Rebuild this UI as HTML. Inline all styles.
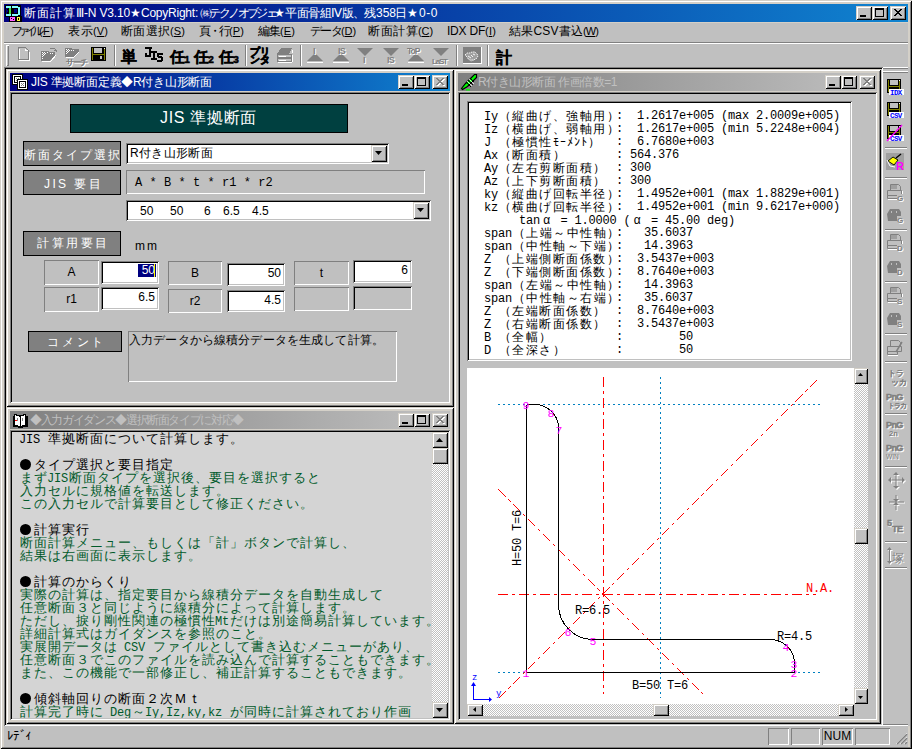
<!DOCTYPE html><html><head><meta charset="utf-8"><style>
*{margin:0;padding:0;box-sizing:border-box}
html,body{width:912px;height:749px;overflow:hidden;background:#c0c0c0}
body{position:relative;font-family:"Liberation Sans",sans-serif;font-size:12px;color:#000}
div{position:absolute}
.raised{background:#c0c0c0;box-shadow:inset 1px 1px #d4d0c8,inset -1px -1px #000,inset 2px 2px #fff,inset -2px -2px #808080}
.win{background:#d4d0c8;box-shadow:inset 1px 1px #d4d0c8,inset -1px -1px #000,inset 2px 2px #fff,inset -2px -2px #808080}
.sunk{box-shadow:inset 1px 1px #808080,inset -1px -1px #fff,inset 2px 2px #000,inset -2px -2px #c0c0c0}
.sunk1{box-shadow:inset 1px 1px #808080,inset -1px -1px #fff}
.tb{box-shadow:inset 1px 1px #fff,inset -1px -1px #808080}
.cap{color:#fff;white-space:nowrap;line-height:18px;font-size:12px}
.btn{width:16px;height:14px;background:#c0c0c0;box-shadow:inset 1px 1px #d4d0c8,inset -1px -1px #000,inset 2px 2px #fff,inset -2px -2px #808080}
.t{white-space:nowrap;line-height:13px}
.o{font-family:"Liberation Mono",monospace;font-size:12px;letter-spacing:-0.2px;white-space:pre;line-height:13px}
.o i{display:inline-block;width:13.5px;font-style:normal;text-align:center;letter-spacing:0;font-family:"Liberation Sans",sans-serif}
.o u{display:inline-block;width:7px;text-decoration:none;text-align:center;letter-spacing:0;font-family:"Liberation Sans",sans-serif}
.g{font-family:"Liberation Mono",monospace;font-size:12px;letter-spacing:-0.2px;white-space:pre;line-height:13px}
.g i{display:inline-block;width:14px;font-style:normal;text-align:center;letter-spacing:0;font-size:13px;font-family:"Liberation Sans",sans-serif}
.dot{display:inline-block;width:11px;height:11px;border-radius:50%;background:#000;vertical-align:-1px;position:relative;left:-0.5px}
.lbl{background:#808080;box-shadow:inset 0 0 0 1px #000;color:#fff;text-align:center;white-space:nowrap}
</style></head><body><div style="left:0px;top:0px;width:912px;height:749px;background:#d4d0c8;box-shadow:inset 1px 1px #d4d0c8,inset -1px -1px #000,inset 2px 2px #fff,inset -2px -2px #808080"></div><div style="left:4px;top:4px;width:904px;height:18px;background:linear-gradient(to right,#000080,#1084d0)"></div><svg style="position:absolute;left:0;top:0" width="24" height="24" shape-rendering="crispEdges"><rect x="5" y="5" width="16" height="12" fill="#000"/><rect x="9" y="16" width="13" height="6" fill="#000"/><rect x="6" y="6" width="5" height="2" fill="#80ffff"/><rect x="6" y="14" width="5" height="2" fill="#80ffff"/><rect x="9" y="8" width="2" height="6" fill="#40e040"/><rect x="7" y="8" width="1" height="1" fill="#000080"/><rect x="6" y="10" width="2" height="2" fill="#000080"/><rect x="6" y="8" width="1" height="3" fill="#000080"/><rect x="6" y="11" width="1" height="3" fill="#000080"/><rect x="12" y="6" width="6" height="2" fill="#80ffff"/><rect x="12" y="14" width="6" height="2" fill="#80ffff"/><rect x="18" y="7" width="2" height="8" fill="#80ffff"/><rect x="17" y="7" width="1" height="1" fill="#80ffff"/><rect x="17" y="14" width="1" height="1" fill="#80ffff"/><rect x="14" y="9" width="3" height="4" fill="#000080"/><rect x="10" y="17" width="5" height="4" fill="#ff60ff"/><rect x="11" y="18" width="1" height="1" fill="#000"/><rect x="13" y="19" width="1" height="1" fill="#000"/><rect x="17" y="17" width="3" height="4" fill="#ffff40"/><rect x="18" y="18" width="1" height="2" fill="#000"/></svg><div class="t" style="left:24px;top:4px;font-size:12px;line-height:18px;color:#fff;letter-spacing:1.000px;">断面計算Ⅲ</div><div class="t" style="left:84px;top:4px;font-size:12px;line-height:18px;color:#fff;letter-spacing:-0.170px;">-N V3.10</div><div class="t" style="left:130px;top:4px;font-size:12px;line-height:18px;color:#fff;letter-spacing:1.000px;">★</div><div class="t" style="left:141px;top:4px;font-size:12px;line-height:18px;color:#fff;letter-spacing:-0.237px;">CopyRight:</div><div class="t" style="left:200px;top:4px;font-size:12px;line-height:18px;color:#fff;letter-spacing:-2.625px;">㈱テクノオブジェ</div><div class="t" style="left:274px;top:4px;font-size:12px;line-height:18px;color:#fff;letter-spacing:1.000px;">★</div><div class="t" style="left:285px;top:4px;font-size:12px;line-height:18px;color:#fff;letter-spacing:-0.429px;">平面骨組Ⅳ版、</div><div class="t" style="left:364px;top:4px;font-size:12px;line-height:18px;color:#fff;letter-spacing:1.000px;">残</div><div class="t" style="left:376px;top:4px;font-size:12px;line-height:18px;color:#fff;letter-spacing:-0.010px;">358</div><div class="t" style="left:395px;top:4px;font-size:12px;line-height:18px;color:#fff;letter-spacing:1.000px;">日</div><div class="t" style="left:407px;top:4px;font-size:12px;line-height:18px;color:#fff;letter-spacing:2.000px;">★</div><div class="t" style="left:419px;top:4px;font-size:12px;line-height:18px;color:#fff;letter-spacing:0.552px;">0-0</div><div class="btn" style="left:856px;top:6px;width:16px;height:14px;"><div style="left:4px;top:9px;width:6px;height:2px;background:#000"></div></div><div class="btn" style="left:872px;top:6px;width:16px;height:14px;"><div style="left:3px;top:2px;width:9px;height:9px;border:1px solid #000;border-top-width:2px"></div></div><div class="btn" style="left:890px;top:6px;width:16px;height:14px;"><svg style="position:absolute;left:0;top:0" width="16" height="14" shape-rendering="crispEdges"><path d="M4 3h2v1h-2zM10 3h2v1h-2zM5 4h2v1h-2zM9 4h2v1h-2zM6 5h4v1h-4zM7 6h2v1h-2zM6 7h4v1h-4zM5 8h2v1h-2zM9 8h2v1h-2zM4 9h2v1h-2zM10 9h2v1h-2z" fill="#000"/></svg></div><div style="left:4px;top:23px;width:904px;height:19px;background:#c0c0c0"></div><div class="t" style="left:11px;top:24px;font-size:12px;line-height:14px;letter-spacing:-5.000px;">ファイル</div><div class="t" style="left:39px;top:24px;font-size:11px;line-height:14px;letter-spacing:0.307px;">(<u>F</u>)</div><div class="t" style="left:68px;top:24px;font-size:12px;line-height:14px;letter-spacing:0.500px;">表示</div><div class="t" style="left:93px;top:24px;font-size:11px;line-height:14px;letter-spacing:0.104px;">(<u>V</u>)</div><div class="t" style="left:121px;top:24px;font-size:12px;line-height:14px;letter-spacing:0.250px;">断面選択</div><div class="t" style="left:170px;top:24px;font-size:11px;line-height:14px;letter-spacing:0.104px;">(<u>S</u>)</div><div class="t" style="left:199px;top:24px;font-size:12px;line-height:14px;letter-spacing:-2.000px;">頁・行</div><div class="t" style="left:229px;top:24px;font-size:11px;line-height:14px;letter-spacing:0.104px;">(<u>P</u>)</div><div class="t" style="left:258px;top:24px;font-size:12px;line-height:14px;letter-spacing:-1.000px;">編集</div><div class="t" style="left:280px;top:24px;font-size:11px;line-height:14px;letter-spacing:0.104px;">(<u>E</u>)</div><div class="t" style="left:310px;top:24px;font-size:12px;line-height:14px;letter-spacing:-1.667px;">データ</div><div class="t" style="left:341px;top:24px;font-size:11px;line-height:14px;letter-spacing:-0.099px;">(<u>D</u>)</div><div class="t" style="left:368px;top:24px;font-size:12px;line-height:14px;letter-spacing:0.500px;">断面計算</div><div class="t" style="left:418px;top:24px;font-size:11px;line-height:14px;letter-spacing:-0.099px;">(<u>C</u>)</div><div class="t" style="left:447px;top:24px;font-size:12px;line-height:14px;letter-spacing:-0.224px;">IDX DF</div><div class="t" style="left:485px;top:24px;font-size:11px;line-height:14px;letter-spacing:0.198px;">(<u>I</u>)</div><div class="t" style="left:509px;top:24px;font-size:12px;line-height:14px;letter-spacing:0.188px;">結果CSV書込</div><div class="t" style="left:583px;top:24px;font-size:11px;line-height:14px;letter-spacing:-0.911px;">(<u>W</u>)</div><div style="left:4px;top:42px;width:904px;height:1px;background:#808080"></div><div style="left:4px;top:43px;width:904px;height:1px;background:#fff"></div><div style="left:4px;top:44px;width:904px;height:23px;background:#c0c0c0"></div><div style="left:6px;top:45px;width:3px;height:21px;box-shadow:inset 1px 1px #fff,inset -1px -1px #808080"></div><svg style="position:absolute;left:0;top:0" width="912" height="749"><g shape-rendering="crispEdges" fill="none"><path d="M19.5 48.5V60.5H29.5V51.5" stroke="#fff"/><path d="M18.5 47.5H25.5L28.5 50.5V59.5H18.5Z" stroke="#808080"/><path d="M25.5 48.5V50.5H27.5" stroke="#fff"/></g><g shape-rendering="crispEdges"><path d="M41 51h7l1 1h6v3l-5 6H41z" fill="#808080"/><path d="M42 52h1v1h-1zM44 52h1v1h-1zM43 53h1v1h-1zM42 54h1v1h-1zM45 53h1v1h-1zM44 54h1v1h-1zM43 55h1v1h-1zM42 56h1v1h-1zM42 58h1v1h-1zM47 52h1v1h-1zM50 53h1v1h-1zM52 53h1v1h-1z" fill="#fff"/><path d="M42 61h9M51 61l5-6" stroke="#fff" fill="none"/><path d="M50 48h4l2 2v2M54 50h3" stroke="#808080" fill="none"/></g><g shape-rendering="crispEdges"><path d="M65 48h6l1 1h7v3l-5 5H65z" fill="#808080"/><path d="M66 49h1v1h-1zM68 49h1v1h-1zM67 50h1v1h-1zM66 51h1v1h-1zM69 50h1v1h-1zM68 51h1v1h-1zM67 52h1v1h-1zM66 53h1v1h-1zM71 50h1v1h-1zM73 50h1v1h-1z" fill="#fff"/><path d="M66 57h8M74 57l5-5" stroke="#fff" fill="none"/></g><text x="67" y="65.5" font-size="7.5" font-weight="bold" fill="#fff" stroke="#fff" font-family="Liberation Sans" letter-spacing="-0.8" stroke-width="0.01">サーチ</text><text x="66" y="64.5" font-size="7.5" font-weight="bold" fill="#808080" stroke="#808080" font-family="Liberation Sans" letter-spacing="-0.8" stroke-width="0.01">サーチ</text><g shape-rendering="crispEdges"><rect x="91" y="47" width="15" height="14" fill="#000"/><rect x="92" y="48" width="1" height="12" fill="#808000"/><rect x="104" y="49" width="1" height="11" fill="#808000"/><rect x="92" y="54" width="13" height="1" fill="#808000"/><rect x="94" y="48" width="8" height="5" fill="#c0c0c0"/><rect x="100" y="56" width="2" height="3" fill="#c0c0c0"/><rect x="104" y="48" width="1" height="1" fill="#fff"/></g><rect x="114" y="45" width="1" height="21" fill="#808080"/><rect x="115" y="45" width="1" height="21" fill="#fff"/><text x="121" y="62" font-size="16" font-weight="bold" fill="#000" stroke="#000" stroke-width="0.3">単</text><g shape-rendering="crispEdges" fill="#000"><rect x="145" y="47" width="7" height="2"/><rect x="149" y="47" width="2" height="10"/><rect x="145" y="55" width="5" height="2"/><rect x="145" y="53" width="2" height="3"/><rect x="151" y="51" width="6" height="2"/><rect x="153" y="51" width="2" height="9"/><rect x="151" y="58" width="6" height="2"/><rect x="158" y="53" width="5" height="2"/><rect x="157" y="53" width="2" height="4"/><rect x="158" y="56" width="4" height="2"/><rect x="161" y="57" width="2" height="4"/><rect x="157" y="60" width="5" height="2"/></g><text x="170" y="62" font-size="15" font-weight="bold" fill="#000" stroke="#000" stroke-width="0.3">任</text><text x="184" y="63" font-size="10" font-weight="bold" font-family="Liberation Mono" stroke="#000" stroke-width="0.5">1</text><text x="194" y="62" font-size="15" font-weight="bold" fill="#000" stroke="#000" stroke-width="0.3">任</text><text x="208" y="63" font-size="10" font-weight="bold" font-family="Liberation Mono" stroke="#000" stroke-width="0.5">2</text><text x="219" y="62" font-size="15" font-weight="bold" fill="#000" stroke="#000" stroke-width="0.3">任</text><text x="233" y="63" font-size="10" font-weight="bold" font-family="Liberation Mono" stroke="#000" stroke-width="0.5">3</text><rect x="245" y="45" width="1" height="21" fill="#808080"/><rect x="246" y="45" width="1" height="21" fill="#fff"/><text x="250" y="55" font-size="9.5" font-weight="bold" letter-spacing="-0.5" stroke="#000" stroke-width="0.8">プリ</text><text x="250" y="63" font-size="9.5" font-weight="bold" letter-spacing="-0.5" stroke="#000" stroke-width="0.8">ンタ</text><g shape-rendering="crispEdges"><path d="M281 48h11l-3 6h-12z" fill="#808080"/><path d="M277 54h14v3h-14zM277 58h14v3h-14z" fill="#c0c0c0" stroke="#808080" stroke-width="1"/><path d="M278 62h14M292 55v7M292 50v3" stroke="#fff"/><path d="M279 56h7M279 60h7" stroke="#fff"/></g><rect x="300" y="45" width="1" height="21" fill="#808080"/><rect x="301" y="45" width="1" height="21" fill="#fff"/><path d="M307 61l8-8 8 8z" fill="#808080"/><path d="M307 62h16" stroke="#fff" shape-rendering="crispEdges"/><text x="314" y="55" font-size="9" font-weight="bold" fill="#fff" stroke="#fff" font-family="Liberation Sans" letter-spacing="0" stroke-width="0.01">I</text><text x="313" y="54" font-size="9" font-weight="bold" fill="#808080" stroke="#808080" font-family="Liberation Sans" letter-spacing="0" stroke-width="0.01">I</text><path d="M333 61l8-8 8 8z" fill="#808080"/><path d="M333 62h16" stroke="#fff" shape-rendering="crispEdges"/><text x="339" y="55" font-size="9" font-weight="bold" fill="#fff" stroke="#fff" font-family="Liberation Sans" letter-spacing="-0.8" stroke-width="0.01">IS</text><text x="338" y="54" font-size="9" font-weight="bold" fill="#808080" stroke="#808080" font-family="Liberation Sans" letter-spacing="-0.8" stroke-width="0.01">IS</text><path d="M357 48h16l-8 8z" fill="#808080"/><text x="364" y="64" font-size="9" font-weight="bold" fill="#fff" stroke="#fff" font-family="Liberation Sans" letter-spacing="0" stroke-width="0.01">I</text><text x="363" y="63" font-size="9" font-weight="bold" fill="#808080" stroke="#808080" font-family="Liberation Sans" letter-spacing="0" stroke-width="0.01">I</text><path d="M383 48h16l-8 8z" fill="#808080"/><text x="388" y="64" font-size="9" font-weight="bold" fill="#fff" stroke="#fff" font-family="Liberation Sans" letter-spacing="-0.8" stroke-width="0.01">IS</text><text x="387" y="63" font-size="9" font-weight="bold" fill="#808080" stroke="#808080" font-family="Liberation Sans" letter-spacing="-0.8" stroke-width="0.01">IS</text><path d="M408 61l8-8 8 8z" fill="#808080"/><path d="M408 62h16" stroke="#fff" shape-rendering="crispEdges"/><text x="408" y="55" font-size="8.5" font-weight="bold" fill="#fff" stroke="#fff" font-family="Liberation Sans" letter-spacing="-1" stroke-width="0.01">ToP</text><text x="407" y="54" font-size="8.5" font-weight="bold" fill="#808080" stroke="#808080" font-family="Liberation Sans" letter-spacing="-1" stroke-width="0.01">ToP</text><path d="M433 48h16l-8 8z" fill="#808080"/><text x="433" y="65" font-size="8" font-weight="bold" fill="#fff" stroke="#fff" font-family="Liberation Sans" letter-spacing="-1.2" stroke-width="0.01">LaST</text><text x="432" y="64" font-size="8" font-weight="bold" fill="#808080" stroke="#808080" font-family="Liberation Sans" letter-spacing="-1.2" stroke-width="0.01">LaST</text><rect x="456" y="45" width="1" height="21" fill="#808080"/><rect x="457" y="45" width="1" height="21" fill="#fff"/><g shape-rendering="crispEdges"><rect x="463" y="47" width="18" height="16" fill="#808080"/><rect x="481" y="47" width="1" height="17" fill="#fff"/><rect x="463" y="63" width="19" height="1" fill="#fff"/></g><path d="M465 55l2-2 3 0 2-1 3 0 2 2 1 2-2 3-3 1-3 0z" fill="#a0a0a0" stroke="#fff" stroke-width="0.9" stroke-dasharray="1.5 0.8"/><path d="M468 56l3 2M471 55l2 2M473 54l2 1" stroke="#fff" stroke-width="0.9"/><path d="M467 58l4 3 3-1" stroke="#c0c0c0" fill="none"/><rect x="487" y="45" width="1" height="21" fill="#808080"/><rect x="488" y="45" width="1" height="21" fill="#fff"/><text x="496" y="63" font-size="16" font-weight="bold" fill="#000" stroke="#000" stroke-width="0.3">計</text></svg><div style="left:4px;top:67px;width:879px;height:659px;background:#808080;box-shadow:inset 1px 1px #808080,inset -1px -1px #fff,inset 2px 2px #000,inset -2px -2px #c0c0c0"></div><div class="win" style="left:6px;top:69px;width:448px;height:338px;"></div><div style="left:10px;top:73px;width:440px;height:18px;background:linear-gradient(to right,#000080,#1084d0)"></div><svg style="position:absolute;left:0;top:0" width="40" height="100" shape-rendering="crispEdges"><rect x="12" y="74" width="11" height="11" fill="#000"/><rect x="13" y="75" width="9" height="9" fill="#fff"/><rect x="14" y="76" width="7" height="7" fill="#000"/><rect x="15" y="77" width="5" height="5" fill="#fff"/><rect x="16" y="78" width="1" height="1" fill="#808080"/><rect x="18" y="78" width="1" height="1" fill="#808080"/><rect x="17" y="79" width="1" height="1" fill="#808080"/><rect x="16" y="80" width="1" height="1" fill="#808080"/><rect x="18" y="80" width="1" height="1" fill="#808080"/><rect x="17" y="79" width="11" height="11" fill="#000"/><rect x="18" y="80" width="9" height="9" fill="#fff"/><rect x="19" y="81" width="7" height="7" fill="#000"/><rect x="20" y="82" width="5" height="5" fill="#fff"/><rect x="21" y="83" width="1" height="1" fill="#808080"/><rect x="23" y="83" width="1" height="1" fill="#808080"/><rect x="22" y="84" width="1" height="1" fill="#808080"/><rect x="21" y="85" width="1" height="1" fill="#808080"/><rect x="23" y="85" width="1" height="1" fill="#808080"/></svg><div class="btn" style="left:398px;top:75px;width:16px;height:14px;"><div style="left:4px;top:9px;width:6px;height:2px;background:#000"></div></div><div class="btn" style="left:414px;top:75px;width:16px;height:14px;"><div style="left:3px;top:2px;width:9px;height:9px;border:1px solid #000;border-top-width:2px"></div></div><div class="btn" style="left:432px;top:75px;width:16px;height:14px;"><svg style="position:absolute;left:0;top:0" width="16" height="14" shape-rendering="crispEdges"><path d="M5 4h2v1h-2zM11 4h2v1h-2zM6 5h2v1h-2zM10 5h2v1h-2zM7 6h4v1h-4zM8 7h2v1h-2zM7 8h4v1h-4zM6 9h2v1h-2zM10 9h2v1h-2zM5 10h2v1h-2zM11 10h2v1h-2z" fill="#fff"/><path d="M4 3h2v1h-2zM10 3h2v1h-2zM5 4h2v1h-2zM9 4h2v1h-2zM6 5h4v1h-4zM7 6h2v1h-2zM6 7h4v1h-4zM5 8h2v1h-2zM9 8h2v1h-2zM4 9h2v1h-2zM10 9h2v1h-2z" fill="#808080"/></svg></div><div class="t" style="left:31px;top:73px;font-size:12px;line-height:18px;color:#fff;letter-spacing:-0.241px;">JIS 準拠断面定義◆R付き山形断面</div><div class="sunk" style="left:10px;top:92px;width:440px;height:311px;background:#c0c0c0"></div><div class="win" style="left:6px;top:407px;width:448px;height:317px;"></div><div style="left:10px;top:411px;width:440px;height:18px;background:linear-gradient(to right,#808080,#c0c0c0)"></div><svg style="position:absolute;left:0;top:400px" width="40" height="40" shape-rendering="crispEdges"><path d="M12.5 15.5h2v10h4v1h3v-1h4v-10h2v11h-5v1h-5v-1h-5z" fill="#000"/><path d="M14.5 14.5h2v1h3v1h1v-1h3v-1h2v11h-3v1h-2v1h-1v-1h-2v-1h-3z" fill="#fff" stroke="#000"/><rect x="20" y="16" width="1" height="11" fill="#000"/><path d="M17 18l1 2 -1 1M23 18l-1 2 1 1" stroke="#808080" fill="none"/><rect x="15" y="20" width="2" height="1" fill="#ff0000"/></svg><div class="btn" style="left:398px;top:413px;width:16px;height:14px;"><div style="left:4px;top:9px;width:6px;height:2px;background:#000"></div></div><div class="btn" style="left:414px;top:413px;width:16px;height:14px;"><div style="left:3px;top:2px;width:9px;height:9px;border:1px solid #000;border-top-width:2px"></div></div><div class="btn" style="left:432px;top:413px;width:16px;height:14px;"><svg style="position:absolute;left:0;top:0" width="16" height="14" shape-rendering="crispEdges"><path d="M5 4h2v1h-2zM11 4h2v1h-2zM6 5h2v1h-2zM10 5h2v1h-2zM7 6h4v1h-4zM8 7h2v1h-2zM7 8h4v1h-4zM6 9h2v1h-2zM10 9h2v1h-2zM5 10h2v1h-2zM11 10h2v1h-2z" fill="#fff"/><path d="M4 3h2v1h-2zM10 3h2v1h-2zM5 4h2v1h-2zM9 4h2v1h-2zM6 5h4v1h-4zM7 6h2v1h-2zM6 7h4v1h-4zM5 8h2v1h-2zM9 8h2v1h-2zM4 9h2v1h-2zM10 9h2v1h-2z" fill="#808080"/></svg></div><div class="t" style="left:30px;top:411px;font-size:12px;line-height:18px;color:#c0c0c0;letter-spacing:-1.350px;">◆入力ガイダンス◆選択断面タイプに対応◆</div><div class="sunk" style="left:10px;top:430px;width:440px;height:290px;background:#c0c0c0"></div><div class="win" style="left:454px;top:69px;width:427px;height:655px;"></div><div style="left:458px;top:73px;width:419px;height:18px;background:linear-gradient(to right,#808080,#c0c0c0)"></div><svg style="position:absolute;left:456px;top:72px" width="24" height="20"><path d="M5.5 16.5l4-5 9-9h2v3l-9 9-5 3z" fill="#00ff00" stroke="#000" stroke-width="1.2"/><path d="M10 10l5 5M12 8l5 5M14 6l4 4" stroke="#000" stroke-width="1"/><path d="M11 9l5 5M13 7l5 5" stroke="#fff" stroke-width="0.8"/><rect x="10" y="17" width="4" height="1.5" fill="#00ff00"/></svg><div class="btn" style="left:825px;top:75px;width:16px;height:14px;"><div style="left:4px;top:9px;width:6px;height:2px;background:#000"></div></div><div class="btn" style="left:841px;top:75px;width:16px;height:14px;"><div style="left:3px;top:2px;width:9px;height:9px;border:1px solid #000;border-top-width:2px"></div></div><div class="btn" style="left:859px;top:75px;width:16px;height:14px;"><svg style="position:absolute;left:0;top:0" width="16" height="14" shape-rendering="crispEdges"><path d="M5 4h2v1h-2zM11 4h2v1h-2zM6 5h2v1h-2zM10 5h2v1h-2zM7 6h4v1h-4zM8 7h2v1h-2zM7 8h4v1h-4zM6 9h2v1h-2zM10 9h2v1h-2zM5 10h2v1h-2zM11 10h2v1h-2z" fill="#fff"/><path d="M4 3h2v1h-2zM10 3h2v1h-2zM5 4h2v1h-2zM9 4h2v1h-2zM6 5h4v1h-4zM7 6h2v1h-2zM6 7h4v1h-4zM5 8h2v1h-2zM9 8h2v1h-2zM4 9h2v1h-2zM10 9h2v1h-2z" fill="#808080"/></svg></div><div class="t" style="left:478px;top:73px;font-size:12px;line-height:18px;color:#c0c0c0;letter-spacing:-0.478px;">R付き山形断面 作画倍数=1</div><div class="sunk" style="left:458px;top:92px;width:419px;height:628px;background:#c0c0c0"></div><div style="left:70px;top:104px;width:278px;height:29px;background:#004040;box-shadow:inset 0 0 0 1px #000"></div><div class="t" style="left:160px;top:107px;font-size:16px;line-height:22px;color:#fff;letter-spacing:0.680px;">JIS 準拠断面</div><div class="lbl" style="left:23px;top:141px;width:98px;height:25px;"></div><div class="t" style="left:24px;top:148px;font-size:12px;line-height:15px;color:#fff;letter-spacing:2.000px;">断面タイプ選択</div><div class="lbl" style="left:23px;top:170px;width:98px;height:25px;"></div><div class="t" style="left:44px;top:177px;font-size:12px;line-height:15px;color:#fff;letter-spacing:2.388px;">JIS 要目</div><div class="lbl" style="left:23px;top:231px;width:98px;height:25px;"></div><div class="t" style="left:37px;top:236px;font-size:12px;line-height:15px;color:#fff;letter-spacing:2.600px;">計算用要目</div><div class="lbl" style="left:28px;top:331px;width:94px;height:21px;"></div><div class="t" style="left:47px;top:335px;font-size:12px;line-height:15px;color:#fff;letter-spacing:2.750px;">コメント</div><div class="sunk" style="left:126px;top:143px;width:263px;height:21px;background:#fff"></div><div class="raised" style="left:371px;top:145px;width:16px;height:17px;"><svg style="position:absolute;left:4px;top:6px" width="8" height="5"><path d="M0 0h7l-3.5 4z" fill="#000"/></svg></div><div class="t" style="left:130px;top:146px;line-height:15px;"></div><div class="t" style="left:130px;top:146px;font-size:12px;line-height:15px;letter-spacing:0.333px;">R付き山形断面</div><div class="sunk1" style="left:126px;top:170px;width:299px;height:24px;"></div><div class="o" style="left:135px;top:177px;font-size:12px;letter-spacing:0.05px">A * B * t * r1 * r2</div><div class="sunk" style="left:126px;top:200px;width:305px;height:21px;background:#fff"></div><div class="raised" style="left:413px;top:202px;width:16px;height:17px;"><svg style="position:absolute;left:4px;top:6px" width="8" height="5"><path d="M0 0h7l-3.5 4z" fill="#000"/></svg></div><div class="t" style="left:130px;top:203px;line-height:15px;"></div><div class="t" style="left:140px;top:204px;line-height:14px">50</div><div class="t" style="left:170px;top:204px;line-height:14px">50</div><div class="t" style="left:204px;top:204px;line-height:14px">6</div><div class="t" style="left:223px;top:204px;line-height:14px">6.5</div><div class="t" style="left:252px;top:204px;line-height:14px">4.5</div><div class="t" style="left:135px;top:240px;letter-spacing:2px">mm</div><div class="sunk1" style="left:44px;top:260px;width:55px;height:25px;text-align:center;line-height:25px">A</div><div class="sunk" style="left:101px;top:261px;width:58px;height:23px;background:#fff"></div><div style="left:138px;top:264px;width:18px;height:13px;background:#000080;color:#fff;text-align:right;line-height:13px;padding-right:1px;white-space:nowrap">50</div><div style="left:154px;top:264px;width:1px;height:13px;background:#ffff00"></div><div class="sunk1" style="left:168px;top:261px;width:54px;height:24px;text-align:center;line-height:24px">B</div><div class="sunk" style="left:227px;top:263px;width:58px;height:23px;background:#fff"></div><div class="t" style="right:631px;top:266px;line-height:14px">50</div><div class="sunk1" style="left:294px;top:261px;width:55px;height:24px;text-align:center;line-height:24px">t</div><div class="sunk" style="left:353px;top:260px;width:59px;height:23px;background:#fff"></div><div class="t" style="right:504px;top:263px;line-height:14px">6</div><div class="sunk1" style="left:44px;top:287px;width:55px;height:25px;text-align:center;line-height:25px">r1</div><div class="sunk" style="left:101px;top:287px;width:58px;height:23px;background:#fff"></div><div class="t" style="right:757px;top:290px;line-height:14px">6.5</div><div class="sunk1" style="left:168px;top:289px;width:54px;height:24px;text-align:center;line-height:24px">r2</div><div class="sunk" style="left:227px;top:290px;width:58px;height:22px;background:#fff"></div><div class="t" style="right:631px;top:293px;line-height:14px">4.5</div><div class="sunk1" style="left:294px;top:287px;width:55px;height:24px;text-align:center;line-height:24px"></div><div class="sunk" style="left:353px;top:286px;width:59px;height:24px;background:#c0c0c0"></div><div class="sunk1" style="left:128px;top:331px;width:269px;height:51px;"></div><div class="t" style="left:129px;top:333px;font-size:12px;line-height:15px;letter-spacing:0.143px;">入力データから線積分データを生成して計算。</div><div style="left:12px;top:432px;width:436px;height:286px;background:#d4d4d4"></div><div style="left:0;top:0;width:448px;height:718px;overflow:hidden;clip-path:inset(432px 0 0 12px)"><div class="g" style="left:19px;top:432px;color:#000">JIS <i>準</i><i>拠</i><i>断</i><i>面</i><i>に</i><i>つ</i><i>い</i><i>て</i><i>計</i><i>算</i><i>し</i><i>ま</i><i>す</i><i>。</i></div><div class="g" style="left:19px;top:445px;color:#000"></div><div class="g" style="left:19px;top:458px;color:#000"><i><b class="dot"></b></i><i>タ</i><i>イ</i><i>プ</i><i>選</i><i>択</i><i>と</i><i>要</i><i>目</i><i>指</i><i>定</i></div><div class="g" style="left:19px;top:471px;color:#005a2a"><i>ま</i><i>ず</i>JIS<i>断</i><i>面</i><i>タ</i><i>イ</i><i>プ</i><i>を</i><i>選</i><i>択</i><i>後</i><i>、</i><i>要</i><i>目</i><i>を</i><i>選</i><i>択</i><i>す</i><i>る</i><i>と</i></div><div class="g" style="left:19px;top:484px;color:#005a2a"><i>入</i><i>力</i><i>セ</i><i>ル</i><i>に</i><i>規</i><i>格</i><i>値</i><i>を</i><i>転</i><i>送</i><i>し</i><i>ま</i><i>す</i><i>。</i></div><div class="g" style="left:19px;top:497px;color:#005a2a"><i>こ</i><i>の</i><i>入</i><i>力</i><i>セ</i><i>ル</i><i>で</i><i>計</i><i>算</i><i>要</i><i>目</i><i>と</i><i>し</i><i>て</i><i>修</i><i>正</i><i>く</i><i>だ</i><i>さ</i><i>い</i><i>。</i></div><div class="g" style="left:19px;top:510px;color:#000"></div><div class="g" style="left:19px;top:523px;color:#000"><i><b class="dot"></b></i><i>計</i><i>算</i><i>実</i><i>行</i></div><div class="g" style="left:19px;top:536px;color:#005a2a"><i>断</i><i>面</i><i>計</i><i>算</i><i>メ</i><i>ニ</i><i>ュ</i><i>ー</i><i>、</i><i>も</i><i>し</i><i>く</i><i>は</i><i>「</i><i>計</i><i>」</i><i>ボ</i><i>タ</i><i>ン</i><i>で</i><i>計</i><i>算</i><i>し</i><i>、</i></div><div class="g" style="left:19px;top:549px;color:#005a2a"><i>結</i><i>果</i><i>は</i><i>右</i><i>画</i><i>面</i><i>に</i><i>表</i><i>示</i><i>し</i><i>ま</i><i>す</i><i>。</i></div><div class="g" style="left:19px;top:562px;color:#000"></div><div class="g" style="left:19px;top:575px;color:#000"><i><b class="dot"></b></i><i>計</i><i>算</i><i>の</i><i>か</i><i>ら</i><i>く</i><i>り</i></div><div class="g" style="left:19px;top:588px;color:#005a2a"><i>実</i><i>際</i><i>の</i><i>計</i><i>算</i><i>は</i><i>、</i><i>指</i><i>定</i><i>要</i><i>目</i><i>か</i><i>ら</i><i>線</i><i>積</i><i>分</i><i>デ</i><i>ー</i><i>タ</i><i>を</i><i>自</i><i>動</i><i>生</i><i>成</i><i>し</i><i>て</i></div><div class="g" style="left:19px;top:601px;color:#005a2a"><i>任</i><i>意</i><i>断</i><i>面</i><i>３</i><i>と</i><i>同</i><i>じ</i><i>よ</i><i>う</i><i>に</i><i>線</i><i>積</i><i>分</i><i>に</i><i>よ</i><i>っ</i><i>て</i><i>計</i><i>算</i><i>し</i><i>ま</i><i>す</i><i>。</i></div><div class="g" style="left:19px;top:614px;color:#005a2a"><i>た</i><i>だ</i><i>し</i><i>、</i><i>捩</i><i>り</i><i>剛</i><i>性</i><i>関</i><i>連</i><i>の</i><i>極</i><i>慣</i><i>性</i>Mt<i>だ</i><i>け</i><i>は</i><i>別</i><i>途</i><i>簡</i><i>易</i><i>計</i><i>算</i><i>し</i><i>て</i><i>い</i><i>ま</i><i>す</i><i>。</i></div><div class="g" style="left:19px;top:627px;color:#005a2a"><i>詳</i><i>細</i><i>計</i><i>算</i><i>式</i><i>は</i><i>ガ</i><i>イ</i><i>ダ</i><i>ン</i><i>ス</i><i>を</i><i>参</i><i>照</i><i>の</i><i>こ</i><i>と</i><i>。</i></div><div class="g" style="left:19px;top:640px;color:#005a2a"><i>実</i><i>展</i><i>開</i><i>デ</i><i>ー</i><i>タ</i><i>は</i> CSV <i>フ</i><i>ァ</i><i>イ</i><i>ル</i><i>と</i><i>し</i><i>て</i><i>書</i><i>き</i><i>込</i><i>む</i><i>メ</i><i>ニ</i><i>ュ</i><i>ー</i><i>が</i><i>あ</i><i>り</i><i>、</i></div><div class="g" style="left:19px;top:653px;color:#005a2a"><i>任</i><i>意</i><i>断</i><i>面</i><i>３</i><i>で</i><i>こ</i><i>の</i><i>フ</i><i>ァ</i><i>イ</i><i>ル</i><i>を</i><i>読</i><i>み</i><i>込</i><i>ん</i><i>で</i><i>計</i><i>算</i><i>す</i><i>る</i><i>こ</i><i>と</i><i>も</i><i>で</i><i>き</i><i>ま</i><i>す</i><i>。</i></div><div class="g" style="left:19px;top:666px;color:#005a2a"><i>ま</i><i>た</i><i>、</i><i>こ</i><i>の</i><i>機</i><i>能</i><i>で</i><i>一</i><i>部</i><i>修</i><i>正</i><i>し</i><i>、</i><i>補</i><i>正</i><i>計</i><i>算</i><i>す</i><i>る</i><i>こ</i><i>と</i><i>も</i><i>で</i><i>き</i><i>ま</i><i>す</i><i>。</i></div><div class="g" style="left:19px;top:679px;color:#000"></div><div class="g" style="left:19px;top:692px;color:#000"><i><b class="dot"></b></i><i>傾</i><i>斜</i><i>軸</i><i>回</i><i>り</i><i>の</i><i>断</i><i>面</i><i>２</i><i>次</i><i>Ｍ</i><i>ｔ</i></div><div class="g" style="left:19px;top:705px;color:#005a2a"><i>計</i><i>算</i><i>完</i><i>了</i><i>時</i><i>に</i> Deg<i>～</i>Iy,Iz,ky,kz <i>が</i><i>同</i><i>時</i><i>に</i><i>計</i><i>算</i><i>さ</i><i>れ</i><i>て</i><i>お</i><i>り</i><i>作</i><i>画</i></div></div><div style="left:432px;top:432px;width:16px;height:286px;background-color:#fff;background-image:repeating-conic-gradient(#c0c0c0 0 25%,#fff 0 50%);background-size:2px 2px"></div><div class="raised" style="left:432px;top:432px;width:16px;height:16px;background:#c0c0c0"><svg style="position:absolute;left:4px;top:6px" width="7" height="4"><path d="M3.5 0L7 4H0z" fill="#000"/></svg></div><div class="raised" style="left:432px;top:702px;width:16px;height:16px;background:#c0c0c0"><svg style="position:absolute;left:4px;top:6px" width="7" height="4"><path d="M0 0h7L3.5 4z" fill="#000"/></svg></div><div class="raised" style="left:432px;top:448px;width:16px;height:16px;background:#c0c0c0"></div><div class="sunk" style="left:467px;top:101px;width:385px;height:260px;background:#fff"></div><div class="o" style="left:484px;top:110px">Iy<i>（</i><i>縦</i><i>曲</i><i>げ</i><i>、</i><i>強</i><i>軸</i><i>用</i><i>）</i></div><div class="o" style="left:616px;top:110px">:  1.2617e+005 (max 2.0009e+005)</div><div class="o" style="left:484px;top:123px">Iz<i>（</i><i>横</i><i>曲</i><i>げ</i><i>、</i><i>弱</i><i>軸</i><i>用</i><i>）</i></div><div class="o" style="left:616px;top:123px">:  1.2617e+005 (min 5.2248e+004)</div><div class="o" style="left:484px;top:136px">J <i>（</i><i>極</i><i>慣</i><i>性</i><u>ﾓ</u><u>ｰ</u><u>ﾒ</u><u>ﾝ</u><u>ﾄ</u><i>）</i></div><div class="o" style="left:616px;top:136px">:  6.7680e+003</div><div class="o" style="left:484px;top:149px">Ax<i>（</i><i>断</i><i>面</i><i>積</i><i>）</i></div><div class="o" style="left:616px;top:149px">: 564.376</div><div class="o" style="left:484px;top:162px">Ay<i>（</i><i>左</i><i>右</i><i>剪</i><i>断</i><i>面</i><i>積</i><i>）</i></div><div class="o" style="left:616px;top:162px">: 300</div><div class="o" style="left:484px;top:175px">Az<i>（</i><i>上</i><i>下</i><i>剪</i><i>断</i><i>面</i><i>積</i><i>）</i></div><div class="o" style="left:616px;top:175px">: 300</div><div class="o" style="left:484px;top:188px">ky<i>（</i><i>縦</i><i>曲</i><i>げ</i><i>回</i><i>転</i><i>半</i><i>径</i><i>）</i></div><div class="o" style="left:616px;top:188px">:  1.4952e+001 (max 1.8829e+001)</div><div class="o" style="left:484px;top:201px">kz<i>（</i><i>横</i><i>曲</i><i>げ</i><i>回</i><i>転</i><i>半</i><i>径</i><i>）</i></div><div class="o" style="left:616px;top:201px">:  1.4952e+001 (min 9.6217e+000)</div><div class="o" style="left:484px;top:214px">     tan<i>α</i> = 1.0000 (<i>α</i> = 45.00 deg)</div><div class="o" style="left:484px;top:227px">span<i>（</i><i>上</i><i>端</i><i>～</i><i>中</i><i>性</i><i>軸</i><i>）</i></div><div class="o" style="left:616px;top:227px">:   35.6037</div><div class="o" style="left:484px;top:240px">span<i>（</i><i>中</i><i>性</i><i>軸</i><i>～</i><i>下</i><i>端</i><i>）</i></div><div class="o" style="left:616px;top:240px">:   14.3963</div><div class="o" style="left:484px;top:253px">Z <i>（</i><i>上</i><i>端</i><i>側</i><i>断</i><i>面</i><i>係</i><i>数</i><i>）</i></div><div class="o" style="left:616px;top:253px">:  3.5437e+003</div><div class="o" style="left:484px;top:266px">Z <i>（</i><i>下</i><i>端</i><i>側</i><i>断</i><i>面</i><i>係</i><i>数</i><i>）</i></div><div class="o" style="left:616px;top:266px">:  8.7640e+003</div><div class="o" style="left:484px;top:279px">span<i>（</i><i>左</i><i>端</i><i>～</i><i>中</i><i>性</i><i>軸</i><i>）</i></div><div class="o" style="left:616px;top:279px">:   14.3963</div><div class="o" style="left:484px;top:292px">span<i>（</i><i>中</i><i>性</i><i>軸</i><i>～</i><i>右</i><i>端</i><i>）</i></div><div class="o" style="left:616px;top:292px">:   35.6037</div><div class="o" style="left:484px;top:305px">Z <i>（</i><i>左</i><i>端</i><i>断</i><i>面</i><i>係</i><i>数</i><i>）</i></div><div class="o" style="left:616px;top:305px">:  8.7640e+003</div><div class="o" style="left:484px;top:318px">Z <i>（</i><i>右</i><i>端</i><i>断</i><i>面</i><i>係</i><i>数</i><i>）</i></div><div class="o" style="left:616px;top:318px">:  3.5437e+003</div><div class="o" style="left:484px;top:331px">B <i>（</i><i>全</i><i>幅</i><i>）</i></div><div class="o" style="left:616px;top:331px">:        50</div><div class="o" style="left:484px;top:344px">D <i>（</i><i>全</i><i>深</i><i>さ</i><i>）</i></div><div class="o" style="left:616px;top:344px">:        50</div><div style="left:467px;top:368px;width:387px;height:336px;background:#fff"></div><svg style="position:absolute;left:0;top:0;clip-path:inset(368px 59px 46px 467px)" width="912" height="749"><path d="M498 404.5H821M498 672.5H821M660.5 377V698" stroke="#0080c0" stroke-dasharray="2 3" fill="none" shape-rendering="crispEdges"/><path d="M498 594.5H816M603.5 377V694" stroke="#ff0000" stroke-dasharray="10 4 3 4" fill="none" shape-rendering="crispEdges"/><path d="M498.5 698.5L817.5 379.5M498.5 489.5L703.5 694.5" stroke="#ff0000" stroke-dasharray="10 4 3 4" fill="none" shape-rendering="crispEdges"/><path d="M526.5 404.5V672.5H794.5V663" stroke="#000" fill="none" shape-rendering="crispEdges"/><path d="M794.5 663 A24.5 24 0 0 0 770 639.5M770 639.5H593M558.5 604.5V428M534 404.5H526.5" stroke="#000" fill="none" shape-rendering="crispEdges"/><path d="M794.5 663 A24.5 24 0 0 0 770 639.5M593 639.5 A34.7 35 0 0 1 558.5 604.5M558.5 428 A24 23.5 0 0 0 534 404.5" stroke="#000" fill="none" shape-rendering="crispEdges"/><text x="526" y="676.5" font-size="11.5" fill="#ff00ff" font-family="Liberation Mono" text-anchor="middle">1</text><text x="794" y="676.5" font-size="11.5" fill="#ff00ff" font-family="Liberation Mono" text-anchor="middle">2</text><text x="794" y="667.5" font-size="11.5" fill="#ff00ff" font-family="Liberation Mono" text-anchor="middle">3</text><text x="786" y="650.5" font-size="11.5" fill="#ff00ff" font-family="Liberation Mono" text-anchor="middle">4</text><text x="593" y="644.5" font-size="11.5" fill="#ff00ff" font-family="Liberation Mono" text-anchor="middle">5</text><text x="568" y="635.5" font-size="11.5" fill="#ff00ff" font-family="Liberation Mono" text-anchor="middle">6</text><text x="559" y="433.5" font-size="11.5" fill="#ff00ff" font-family="Liberation Mono" text-anchor="middle">7</text><text x="551" y="416.5" font-size="11.5" fill="#ff00ff" font-family="Liberation Mono" text-anchor="middle">8</text><text x="526" y="408.5" font-size="11.5" fill="#ff00ff" font-family="Liberation Mono" text-anchor="middle">9</text><text x="575" y="614" font-size="12" fill="#000" font-family="Liberation Mono" letter-spacing="-0.2" >R=6.5</text><text x="632" y="689" font-size="12" fill="#000" font-family="Liberation Mono" letter-spacing="-0.2" >B=50 T=6</text><text x="777" y="640" font-size="12" fill="#000" font-family="Liberation Mono" letter-spacing="-0.2" >R=4.5</text><text x="806" y="592" font-size="12" fill="#ff0000" font-family="Liberation Mono" letter-spacing="-0.2" >N.A.</text><text x="0" y="0" font-size="12" font-family="Liberation Mono" letter-spacing="-0.2" transform="translate(521 566) rotate(-90)">H=50 T=6</text><path d="M473.5 699V684M473 699.5H490" stroke="#0000ff" stroke-width="1.5" fill="none" shape-rendering="crispEdges"/><path d="M471 686l2.5-4 2.5 4zM489 697l3 2.5-3 2.5z" fill="#0000ff"/><text x="472" y="680" font-size="9" fill="#0000ff" font-family="Liberation Mono">z</text><text x="496" y="696" font-size="9" fill="#0000ff" font-family="Liberation Mono">y</text></svg><div style="left:854px;top:368px;width:14px;height:336px;background-color:#fff;background-image:repeating-conic-gradient(#c0c0c0 0 25%,#fff 0 50%);background-size:2px 2px"></div><div class="raised" style="left:854px;top:368px;width:14px;height:16px;background:#c0c0c0"><svg style="position:absolute;left:4px;top:5px" width="5" height="3"><path d="M2.5 0L5 3H0z" fill="#000"/></svg></div><div class="raised" style="left:854px;top:688px;width:14px;height:16px;background:#c0c0c0"><svg style="position:absolute;left:4px;top:8px" width="5" height="3"><path d="M0 0h5L2.5 3z" fill="#000"/></svg></div><div class="raised" style="left:854px;top:528px;width:14px;height:16px;background:#c0c0c0"></div><div style="left:467px;top:704px;width:387px;height:12px;background-color:#fff;background-image:repeating-conic-gradient(#c0c0c0 0 25%,#fff 0 50%);background-size:2px 2px"></div><div class="raised" style="left:467px;top:704px;width:16px;height:12px;"><svg style="position:absolute;left:6px;top:3px" width="3" height="5"><path d="M3 0v5L0 2.5z" fill="#000"/></svg></div><div class="raised" style="left:838px;top:704px;width:16px;height:12px;"><svg style="position:absolute;left:7px;top:3px" width="3" height="5"><path d="M0 0v5l3 -2.5z" fill="#000"/></svg></div><div class="raised" style="left:653px;top:704px;width:16px;height:12px;"></div><div style="left:883px;top:67px;width:27px;height:659px;background:#c0c0c0"></div><svg style="position:absolute;left:0;top:0" width="912" height="749"><g shape-rendering="crispEdges"><rect x="883" y="67" width="25" height="1" fill="#fff"/><rect x="883" y="68" width="25" height="1" fill="#808080"/><rect x="883" y="71" width="25" height="1" fill="#fff"/><rect x="883" y="72" width="25" height="1" fill="#808080"/><rect x="883" y="724" width="25" height="1" fill="#808080"/><rect x="883" y="725" width="25" height="1" fill="#fff"/></g><g shape-rendering="crispEdges"><rect x="887" y="79" width="14" height="14" fill="#000"/><rect x="888" y="80" width="1" height="12" fill="#808000"/><rect x="899" y="81" width="1" height="11" fill="#808000"/><rect x="888" y="86" width="12" height="1" fill="#808000"/><rect x="890" y="80" width="8" height="5" fill="#c0c0c0"/><rect x="899" y="80" width="1" height="1" fill="#fff"/><rect x="889" y="89" width="15" height="6" fill="#fff"/></g><text x="890" y="95" font-size="7.5" font-weight="bold" fill="#0000ff" font-family="Liberation Mono" letter-spacing="-0.6">IDX</text><g shape-rendering="crispEdges"><rect x="887" y="102" width="14" height="14" fill="#000"/><rect x="888" y="103" width="1" height="12" fill="#808000"/><rect x="899" y="104" width="1" height="11" fill="#808000"/><rect x="888" y="109" width="12" height="1" fill="#808000"/><rect x="890" y="103" width="8" height="5" fill="#c0c0c0"/><rect x="899" y="103" width="1" height="1" fill="#fff"/><rect x="889" y="112" width="15" height="6" fill="#fff"/></g><text x="890" y="118" font-size="7.5" font-weight="bold" fill="#0000ff" font-family="Liberation Mono" letter-spacing="-0.6">CSV</text><g shape-rendering="crispEdges"><rect x="887" y="125" width="14" height="14" fill="#000"/><rect x="888" y="126" width="1" height="12" fill="#808000"/><rect x="899" y="127" width="1" height="11" fill="#808000"/><rect x="888" y="132" width="12" height="1" fill="#808000"/><rect x="890" y="126" width="8" height="5" fill="#c0c0c0"/><rect x="899" y="126" width="1" height="1" fill="#fff"/><rect x="889" y="135" width="15" height="6" fill="#fff"/></g><text x="890" y="141" font-size="7.5" font-weight="bold" fill="#0000ff" font-family="Liberation Mono" letter-spacing="-0.6">CSV</text><path d="M887 141L902 125" stroke="#ff00ff" stroke-width="1.2"/><g shape-rendering="crispEdges"><rect x="885" y="147" width="22" height="1" fill="#808080"/><rect x="885" y="148" width="22" height="1" fill="#fff"/></g><g shape-rendering="crispEdges"><rect x="886" y="153" width="18" height="17" fill="#a0a0a0"/></g><path d="M888 161l5-4 5 3-4 5z" fill="#ffff00" stroke="#000" stroke-width="0.9"/><path d="M887 160l3 6 5 1" stroke="#fff" fill="none"/><path d="M896 158l5-4" stroke="#000" stroke-width="1.5"/><text x="896" y="170" font-size="11" font-weight="bold" fill="#ff00ff" font-family="Liberation Sans">R</text><g shape-rendering="crispEdges"><rect x="885" y="177" width="22" height="1" fill="#808080"/><rect x="885" y="178" width="22" height="1" fill="#fff"/></g><path d="M890.5 184.5h8l2 2v4h-10z" fill="none" stroke="#808080"/><path d="M891 186h6M891 188h6" stroke="#808080"/><path d="M887.5 190.5h14v5h-14zM887.5 195.5h10v3h-10z" fill="#c0c0c0" stroke="#808080"/><path d="M888 199.5h10M902.5 191v5" stroke="#fff"/><rect x="897" y="194" width="7" height="7" fill="#c0c0c0"/><text x="898" y="202" font-size="8" font-weight="bold" fill="#fff" stroke="#fff" font-family="Liberation Sans" letter-spacing="0" stroke-width="0.01">G</text><text x="897" y="201" font-size="8" font-weight="bold" fill="#808080" stroke="#808080" font-family="Liberation Sans" letter-spacing="0" stroke-width="0.01">G</text><path d="M887 214l3-5h9l2 3v6h-3v3h-10z" fill="#808080"/><path d="M891 212h1M896 212h1" stroke="#fff"/><rect x="897" y="216" width="7" height="7" fill="#c0c0c0"/><text x="898" y="224" font-size="8" font-weight="bold" fill="#fff" stroke="#fff" font-family="Liberation Sans" letter-spacing="0" stroke-width="0.01">G</text><text x="897" y="223" font-size="8" font-weight="bold" fill="#808080" stroke="#808080" font-family="Liberation Sans" letter-spacing="0" stroke-width="0.01">G</text><g shape-rendering="crispEdges"><rect x="885" y="229" width="22" height="1" fill="#808080"/><rect x="885" y="230" width="22" height="1" fill="#fff"/></g><path d="M890.5 234.5h8l2 2v4h-10z" fill="none" stroke="#808080"/><path d="M891 236h6M891 238h6" stroke="#808080"/><path d="M887.5 240.5h14v5h-14zM887.5 245.5h10v3h-10z" fill="#c0c0c0" stroke="#808080"/><path d="M888 249.5h10M902.5 241v5" stroke="#fff"/><rect x="897" y="244" width="7" height="7" fill="#c0c0c0"/><text x="898" y="252" font-size="8" font-weight="bold" fill="#fff" stroke="#fff" font-family="Liberation Sans" letter-spacing="0" stroke-width="0.01">D</text><text x="897" y="251" font-size="8" font-weight="bold" fill="#808080" stroke="#808080" font-family="Liberation Sans" letter-spacing="0" stroke-width="0.01">D</text><path d="M887 266l3-5h9l2 3v6h-3v3h-10z" fill="#808080"/><path d="M891 264h1M896 264h1" stroke="#fff"/><rect x="897" y="268" width="7" height="7" fill="#c0c0c0"/><text x="898" y="276" font-size="8" font-weight="bold" fill="#fff" stroke="#fff" font-family="Liberation Sans" letter-spacing="0" stroke-width="0.01">D</text><text x="897" y="275" font-size="8" font-weight="bold" fill="#808080" stroke="#808080" font-family="Liberation Sans" letter-spacing="0" stroke-width="0.01">D</text><g shape-rendering="crispEdges"><rect x="885" y="281" width="22" height="1" fill="#808080"/><rect x="885" y="282" width="22" height="1" fill="#fff"/></g><path d="M890.5 287.5h8l2 2v4h-10z" fill="none" stroke="#808080"/><path d="M891 289h6M891 291h6" stroke="#808080"/><path d="M887.5 293.5h14v5h-14zM887.5 298.5h10v3h-10z" fill="#c0c0c0" stroke="#808080"/><path d="M888 302.5h10M902.5 294v5" stroke="#fff"/><rect x="897" y="297" width="7" height="7" fill="#c0c0c0"/><text x="898" y="305" font-size="8" font-weight="bold" fill="#fff" stroke="#fff" font-family="Liberation Sans" letter-spacing="0" stroke-width="0.01">S</text><text x="897" y="304" font-size="8" font-weight="bold" fill="#808080" stroke="#808080" font-family="Liberation Sans" letter-spacing="0" stroke-width="0.01">S</text><path d="M887 318l3-5h9l2 3v6h-3v3h-10z" fill="#808080"/><path d="M891 316h1M896 316h1" stroke="#fff"/><rect x="897" y="320" width="7" height="7" fill="#c0c0c0"/><text x="898" y="328" font-size="8" font-weight="bold" fill="#fff" stroke="#fff" font-family="Liberation Sans" letter-spacing="0" stroke-width="0.01">S</text><text x="897" y="327" font-size="8" font-weight="bold" fill="#808080" stroke="#808080" font-family="Liberation Sans" letter-spacing="0" stroke-width="0.01">S</text><g shape-rendering="crispEdges"><rect x="885" y="333" width="22" height="1" fill="#808080"/><rect x="885" y="334" width="22" height="1" fill="#fff"/></g><path d="M890.5 340.5h8l2 2v4h-10z" fill="none" stroke="#808080"/><path d="M887.5 346.5h14v5h-14zM887.5 351.5h10v3h-10z" fill="#c0c0c0" stroke="#808080"/><path d="M896 352l6-10" stroke="#808080" stroke-width="1.5"/><path d="M888 355.5h10" stroke="#fff"/><g shape-rendering="crispEdges"><rect x="885" y="361" width="22" height="1" fill="#808080"/><rect x="885" y="362" width="22" height="1" fill="#fff"/></g><text x="889" y="377" font-size="7.5" font-weight="bold" fill="#fff" stroke="#fff" font-family="Liberation Sans" letter-spacing="-0.5" stroke-width="0.01">トラ</text><text x="888" y="376" font-size="7.5" font-weight="bold" fill="#808080" stroke="#808080" font-family="Liberation Sans" letter-spacing="-0.5" stroke-width="0.01">トラ</text><text x="892" y="386" font-size="7.5" font-weight="bold" fill="#fff" stroke="#fff" font-family="Liberation Sans" letter-spacing="-0.5" stroke-width="0.01">ッカ</text><text x="891" y="385" font-size="7.5" font-weight="bold" fill="#808080" stroke="#808080" font-family="Liberation Sans" letter-spacing="-0.5" stroke-width="0.01">ッカ</text><text x="887" y="401" font-size="9" font-weight="bold" fill="#fff" stroke="#fff" font-family="Liberation Sans" letter-spacing="-0.6" stroke-width="0.6">PnG</text><text x="886" y="400" font-size="9" font-weight="bold" fill="#808080" stroke="#808080" font-family="Liberation Sans" letter-spacing="-0.6" stroke-width="0.6">PnG</text><text x="889" y="409" font-size="6.5" font-weight="bold" fill="#fff" stroke="#fff" font-family="Liberation Sans" letter-spacing="-0.8" stroke-width="0.01">トラカ</text><text x="888" y="408" font-size="6.5" font-weight="bold" fill="#808080" stroke="#808080" font-family="Liberation Sans" letter-spacing="-0.8" stroke-width="0.01">トラカ</text><g shape-rendering="crispEdges"><rect x="885" y="413" width="22" height="1" fill="#808080"/><rect x="885" y="414" width="22" height="1" fill="#fff"/></g><text x="887" y="429" font-size="9" font-weight="bold" fill="#fff" stroke="#fff" font-family="Liberation Sans" letter-spacing="-0.6" stroke-width="0.6">PnG</text><text x="886" y="428" font-size="9" font-weight="bold" fill="#808080" stroke="#808080" font-family="Liberation Sans" letter-spacing="-0.6" stroke-width="0.6">PnG</text><text x="890" y="437" font-size="7.5" font-weight="bold" fill="#fff" stroke="#fff" font-family="Liberation Sans" letter-spacing="0" stroke-width="0.01">2n</text><text x="889" y="436" font-size="7.5" font-weight="bold" fill="#808080" stroke="#808080" font-family="Liberation Sans" letter-spacing="0" stroke-width="0.01">2n</text><text x="887" y="452" font-size="9" font-weight="bold" fill="#fff" stroke="#fff" font-family="Liberation Sans" letter-spacing="-0.6" stroke-width="0.6">PnG</text><text x="886" y="451" font-size="9" font-weight="bold" fill="#808080" stroke="#808080" font-family="Liberation Sans" letter-spacing="-0.6" stroke-width="0.6">PnG</text><text x="887" y="460" font-size="6.5" font-weight="normal" fill="#fff" stroke="#fff" font-family="Liberation Sans" letter-spacing="0" stroke-width="0.01">WIN</text><text x="886" y="459" font-size="6.5" font-weight="normal" fill="#808080" stroke="#808080" font-family="Liberation Sans" letter-spacing="0" stroke-width="0.01">WIN</text><g shape-rendering="crispEdges"><rect x="885" y="466" width="22" height="1" fill="#808080"/><rect x="885" y="467" width="22" height="1" fill="#fff"/></g><g transform="translate(1 1)" fill="#fff" stroke="#fff"><path d="M896 473v15M889 480h15" fill="none"/><path d="M896 472l-3 3h6zM896 489l-3-3h6zM888 480l3-3v6zM905 480l-3-3v6z" stroke="none"/></g><g fill="#808080" stroke="#808080"><path d="M896 473v15M889 480h15" fill="none"/><path d="M896 472l-3 3h6zM896 489l-3-3h6zM888 480l3-3v6zM905 480l-3-3v6z" stroke="none"/></g><g transform="translate(1 1)" fill="#fff" stroke="#fff"><path d="M896 495v15M889 502h15" fill="none"/><path d="M893 499h6l-3 3zM893 505h6l-3-3z" stroke="none"/></g><g fill="#808080" stroke="#808080"><path d="M896 495v15M889 502h15" fill="none"/><path d="M893 499h6l-3 3zM893 505h6l-3-3z" stroke="none"/></g><text x="888" y="527" font-size="9" font-weight="bold" fill="#fff" stroke="#fff" font-family="Liberation Sans" letter-spacing="0" stroke-width="0.5">5</text><text x="887" y="526" font-size="9" font-weight="bold" fill="#808080" stroke="#808080" font-family="Liberation Sans" letter-spacing="0" stroke-width="0.5">5</text><text x="893" y="533" font-size="9" font-weight="bold" fill="#fff" stroke="#fff" font-family="Liberation Sans" letter-spacing="-0.5" stroke-width="0.5">TE</text><text x="892" y="532" font-size="9" font-weight="bold" fill="#808080" stroke="#808080" font-family="Liberation Sans" letter-spacing="-0.5" stroke-width="0.5">TE</text><g shape-rendering="crispEdges"><rect x="885" y="541" width="22" height="1" fill="#808080"/><rect x="885" y="542" width="22" height="1" fill="#fff"/></g><g transform="translate(1 1)" fill="#fff" stroke="#fff"><path d="M889.5 548v15" fill="none"/><path d="M887 550l2.5-3 2.5 3zM887 561l2.5 3 2.5-3z" stroke="none"/></g><g fill="#808080" stroke="#808080"><path d="M889.5 548v15" fill="none"/><path d="M887 550l2.5-3 2.5 3zM887 561l2.5 3 2.5-3z" stroke="none"/></g><text x="893" y="563" font-size="12" font-weight="normal" fill="#fff" stroke="#fff" font-family="Liberation Sans" letter-spacing="0" stroke-width="0.01">塚</text><text x="892" y="562" font-size="12" font-weight="normal" fill="#808080" stroke="#808080" font-family="Liberation Sans" letter-spacing="0" stroke-width="0.01">塚</text><g shape-rendering="crispEdges"><rect x="885" y="567" width="22" height="1" fill="#808080"/><rect x="885" y="568" width="22" height="1" fill="#fff"/></g></svg><div style="left:4px;top:726px;width:904px;height:21px;background:#c0c0c0"></div><div class="t" style="left:7px;top:729px;font-size:13px;line-height:14px;letter-spacing:-1.500px;">ﾚﾃﾞｨ</div><div class="sunk1" style="left:768px;top:728px;width:21px;height:17px;text-align:center;line-height:17px"></div><div class="sunk1" style="left:791px;top:728px;width:29px;height:17px;text-align:center;line-height:17px"></div><div class="sunk1" style="left:822px;top:728px;width:31px;height:17px;text-align:center;line-height:17px">NUM</div><div class="sunk1" style="left:855px;top:728px;width:35px;height:17px;text-align:center;line-height:17px"></div><svg style="position:absolute;left:895px;top:732px" width="13" height="13"><path d="M12 1L1 12M12 5L5 12M12 9L9 12" stroke="#fff"/><path d="M12 2L2 12M12 6L6 12M12 10L10 12" stroke="#808080" stroke-width="1.5"/></svg></body></html>
